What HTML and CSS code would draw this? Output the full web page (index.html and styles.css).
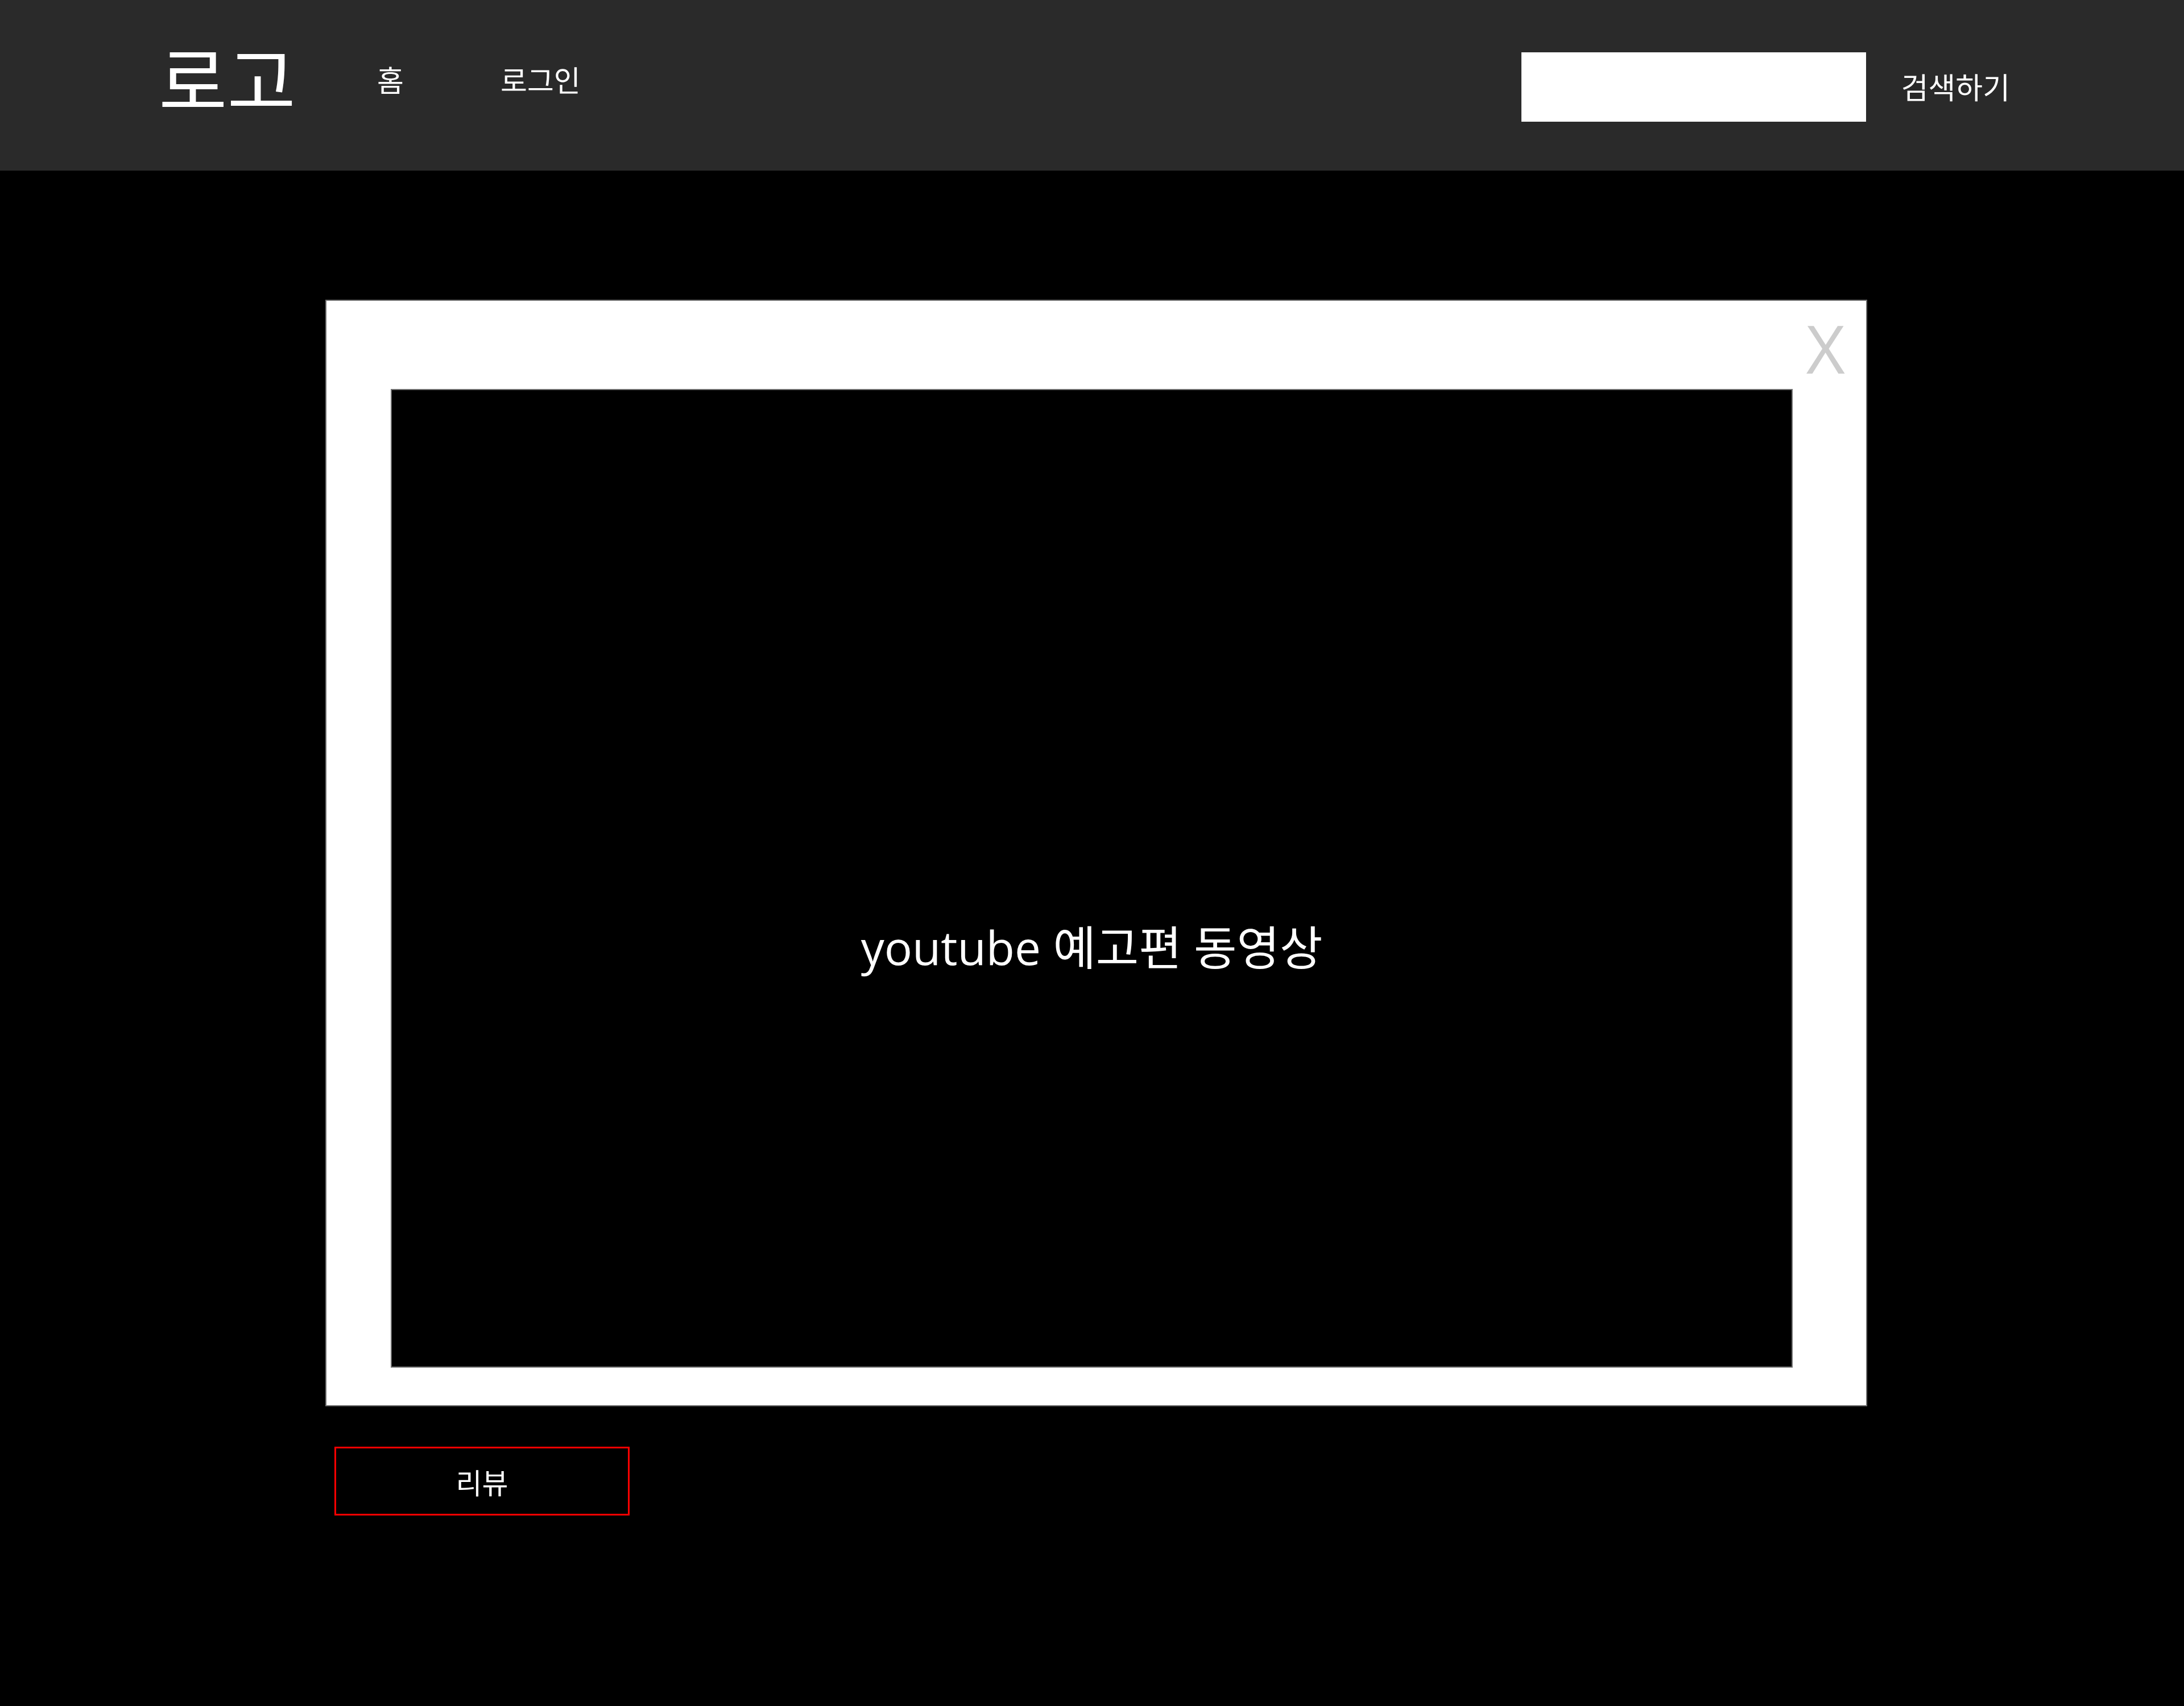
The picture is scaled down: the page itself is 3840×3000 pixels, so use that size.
FILE: index.html
```html
<!DOCTYPE html>
<html lang="ko">
<head>
<meta charset="utf-8">
<title>예고편</title>
<link rel="stylesheet" href="styles.css">
</head>
<body>
<header class="site-header">
  <div class="header-left">
    <a class="logo" href="#">로고</a>
    <nav class="main-nav">
      <a class="nav-link" href="#">홈</a>
      <a class="nav-link" href="#">로그인</a>
    </nav>
  </div>
  <form class="search" onsubmit="return false;">
    <input class="search-input" type="text" aria-label="검색">
    <button class="search-btn" type="submit">검색하기</button>
  </form>
</header>
<main class="page">
  <section class="modal">
    <button class="modal-close" type="button" aria-label="닫기">X</button>
    <div class="video">
      <p class="video-label">youtube 예고편 동영상</p>
    </div>
  </section>
  <button class="review-btn" type="button">리뷰</button>
</main>
</body>
</html>
```
FILE: styles.css
```css
* {
  box-sizing: border-box;
}

html, body {
  margin: 0;
  padding: 0;
  background: #000;
}

body {
  font-family: "Open Sans", "Noto Sans CJK KR", sans-serif;
  color: #fff;
  min-height: 3000px;
}

a {
  color: #fff;
  text-decoration: none;
}

.site-header {
  height: 300px;
  background: #2a2a2a;
  display: flex;
  align-items: center;
  justify-content: space-between;
  padding: 0 306px 0 279px;
}

.header-left {
  display: flex;
  align-items: center;
}

.logo {
  font-family: "Noto Sans CJK KR", sans-serif;
  font-size: 131px;
  line-height: 1;
  margin-right: 143px;
  margin-bottom: 30px;
}

.main-nav {
  display: flex;
  align-items: center;
  gap: 170px;
  margin-bottom: 22px;
}

.nav-link {
  font-family: "Noto Sans CJK KR", sans-serif;
  font-size: 51px;
  line-height: 1;
}

.search {
  display: flex;
  align-items: center;
  margin: 0;
}

.search-input {
  width: 606px;
  height: 122px;
  border: none;
  background: #fff;
  padding: 0 20px;
  margin-top: 6px;
  outline: none;
  font-size: 40px;
}

.search-btn {
  margin-left: 62px;
  margin-top: 4px;
  background: none;
  border: none;
  padding: 0;
  color: #fff;
  font-family: "Noto Sans CJK KR", sans-serif;
  font-size: 52px;
  line-height: 1;
  cursor: pointer;
}

.page {
  padding: 227px 0 0 572px;
}

.modal {
  position: relative;
  width: 2711px;
  height: 1946px;
  background: #fff;
  border: 2px solid #707070;
  padding: 155px 0 0 113px;
}

.modal-close {
  position: absolute;
  top: 24px;
  right: 37px;
  background: none;
  border: none;
  padding: 0;
  font-family: "Open Sans", sans-serif;
  font-size: 118px;
  line-height: 1;
  color: #cccccc;
  cursor: pointer;
}

.video {
  width: 2465px;
  height: 1721px;
  background: #000;
  border: 2px solid #707070;
  display: flex;
  align-items: center;
  justify-content: center;
  padding-top: 240px;
}

.video-label {
  margin: 0;
  font-size: 82px;
  line-height: 1;
  color: #fff;
}

.review-btn {
  display: block;
  width: 519px;
  height: 121px;
  margin: 71px 0 0 16px;
  background: #000;
  border: 3px solid #ff0000;
  color: #fff;
  font-family: "Noto Sans CJK KR", sans-serif;
  font-size: 50px;
  line-height: 1;
  padding: 0;
  cursor: pointer;
}
```
